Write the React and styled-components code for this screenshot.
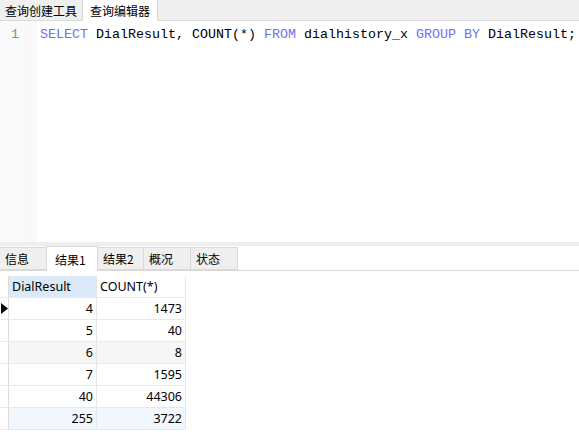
import { Fragment } from "react";
import styled, { createGlobalStyle } from "styled-components";

const Global = createGlobalStyle`
  html, body {
    margin: 0;
    padding: 0;
    background: #fff;
    overflow: hidden;
  }
  * { box-sizing: border-box; }
`;

const UI_FONT = `"Noto Sans", "Noto Sans CJK SC", sans-serif`;
const CJK_FONT = `"Noto Sans CJK SC", "Noto Sans", sans-serif`;

const Window = styled.div`
  width: 579px;
  height: 434px;
  display: flex;
  flex-direction: column;
  background: #fff;
`;

const TopTabs = styled.div`
  height: 21px;
  display: flex;
  align-items: flex-end;
  background: #efefef;
  border-bottom: 1px solid #d9d9d9;
`;

const TopTab = styled.div`
  height: ${(p) => (p.$active ? "21px" : "20px")};
  margin-bottom: ${(p) => (p.$active ? "-1px" : "0")};
  padding: 0 ${(p) => (p.$active ? "7px" : "5px")};
  display: flex;
  align-items: center;
  font-family: ${CJK_FONT};
  font-size: 12px;
  color: #000;
  background: ${(p) => (p.$active ? "#fff" : "#efefef")};
  border-right: 1px solid #d9d9d9;
`;

const Editor = styled.div`
  height: 221px;
  display: flex;
`;

const Gutter = styled.div`
  width: 26px;
  background: #fafafa;
  padding-top: 5px;
  font-family: "Liberation Mono", monospace;
  font-size: 13.33px;
  line-height: 17px;
  color: #8a8a8a;
  text-align: right;
  padding-right: 7px;
`;

const FoldMargin = styled.div`
  width: 11px;
  background-color: #fff;
  background-image: repeating-conic-gradient(#f2f2f2 0 25%, #fff 0 50%);
  background-size: 2px 2px;
`;

const Code = styled.pre`
  margin: 0;
  padding: 5px 0 0 3px;
  font-family: "Liberation Mono", monospace;
  font-size: 13.33px;
  line-height: 17px;
  color: #000;
  white-space: pre;
`;

const Keyword = styled.span`
  color: #6f6ff2;
`;

const Splitter = styled.div`
  height: 4px;
  background: #eeeeee;
`;

const ResultTabs = styled.div`
  height: 25px;
  display: flex;
  align-items: flex-end;
  border-bottom: 1px solid #d9d9d9;
`;

const ResultTab = styled.div`
  height: ${(p) => (p.$active ? "25px" : "23px")};
  margin-bottom: ${(p) => (p.$active ? "-1px" : "0")};
  width: ${(p) => p.$w}px;
  padding-left: ${(p) => (p.$active ? "8px" : "5px")};
  display: flex;
  align-items: center;
  font-family: ${CJK_FONT};
  font-size: 12px;
  color: #000;
  background: ${(p) => (p.$active ? "#fff" : "#efefef")};
  border: 1px solid #d9d9d9;
  border-bottom: ${(p) => (p.$active ? "none" : "1px solid #d9d9d9")};
  border-left: ${(p) => (p.$first ? "none" : "1px solid #d9d9d9")};
  margin-left: ${(p) => (p.$first ? "0" : "-1px")};
`;

const GridArea = styled.div`
  padding-top: 5px;
`;

const Grid = styled.div`
  display: grid;
  grid-template-columns: 9px 88px 89px;
  grid-auto-rows: 22px;
  width: 186px;
`;

const Cell = styled.div`
  display: flex;
  align-items: center;
  justify-content: ${(p) => (p.$head ? "flex-start" : "flex-end")};
  padding: ${(p) => (p.$head ? "0 0 0 3px" : "0 3px 0 0")};
  font-family: ${UI_FONT};
  font-size: 12.5px;
  color: #000;
  background: ${(p) => p.$bg || "#fff"};
  border-right: 1px solid #e6e6e6;
  border-bottom: 1px solid #e9e9e9;
`;

const Indicator = styled.div`
  display: flex;
  align-items: center;
  background: #fff;
  border-right: 1px solid #dcdcdc;
  border-bottom: 1px solid #e9e9e9;
`;

const Arrow = () => (
  <svg width="7" height="11" viewBox="0 0 7 11" style={{ marginLeft: 1 }}>
    <path d="M0 0 L7 5.5 L0 11 Z" fill="#000" />
  </svg>
);

const rows = [
  { a: 4, b: 1473, bg: "#fff", current: true },
  { a: 5, b: 40, bg: "#fff" },
  { a: 6, b: 8, bg: "#f6f6f6" },
  { a: 7, b: 1595, bg: "#fff" },
  { a: 40, b: 44306, bg: "#fff" },
  { a: 255, b: 3722, bg: "#f1f7fd" },
];

const resultTabs = [
  { label: "信息", w: 47 },
  { label: "结果1", w: 52, active: true },
  { label: "结果2", w: 47 },
  { label: "概况", w: 48 },
  { label: "状态", w: 48 },
];

export default function App() {
  return (
    <Window>
      <Global />
      <TopTabs>
        <TopTab>查询创建工具</TopTab>
        <TopTab $active>查询编辑器</TopTab>
      </TopTabs>
      <Editor>
        <Gutter>1</Gutter>
        <FoldMargin />
        <Code>
          <Keyword>SELECT</Keyword> DialResult, COUNT(*) <Keyword>FROM</Keyword>{" "}
          dialhistory_x <Keyword>GROUP BY</Keyword> DialResult;
        </Code>
      </Editor>
      <Splitter />
      <ResultTabs>
        {resultTabs.map((t, i) => (
          <ResultTab key={t.label} $w={t.w} $active={t.active} $first={i === 0}>
            {t.label}
          </ResultTab>
        ))}
      </ResultTabs>
      <GridArea>
        <Grid>
          <Indicator />
          <Cell $head $bg="#dbe9f8">DialResult</Cell>
          <Cell $head>COUNT(*)</Cell>
          {rows.map((r) => (
            <Fragment key={r.a}>
              <Indicator>{r.current && <Arrow />}</Indicator>
              <Cell $bg={r.bg}>{r.a}</Cell>
              <Cell $bg={r.bg}>{r.b}</Cell>
            </Fragment>
          ))}
        </Grid>
      </GridArea>
    </Window>
  );
}
